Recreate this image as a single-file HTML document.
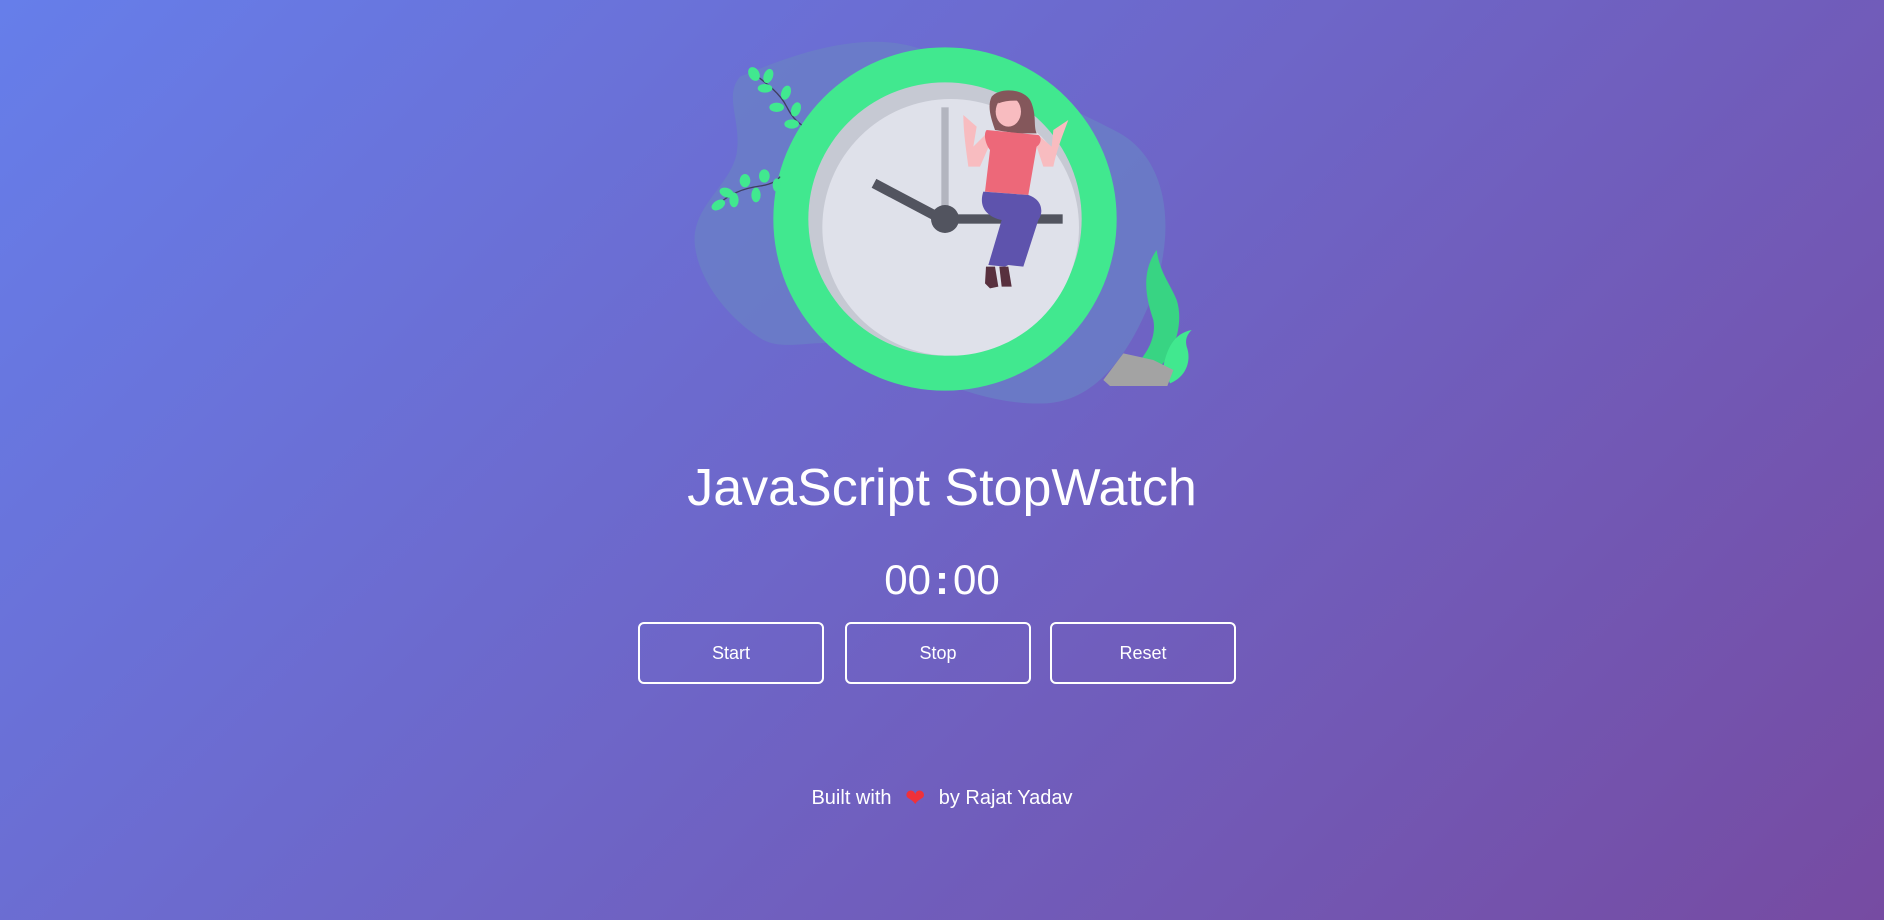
<!DOCTYPE html>
<html><head><meta charset="utf-8"><style>
html,body{margin:0;padding:0;width:1884px;height:920px;overflow:hidden}
body{background:linear-gradient(135deg,#667eea 0%,#764ba2 100%);font-family:"Liberation Sans",Arial,sans-serif;color:#fff;position:relative}
svg.ill{position:absolute;left:680px;top:20px;width:520px;height:400px}
h1{position:absolute;left:0;width:1884px;top:456px;margin:0;text-align:center;font-weight:400;font-size:52px;line-height:64px}
.timer{position:absolute;left:0;width:1884px;top:556px;text-align:center;font-size:42px;line-height:48px}
.timer b{font-weight:700;margin:0 4px}
.btn{position:absolute;top:622px;width:182px;height:58px;border:2px solid #fff;border-radius:6px;text-align:center;line-height:58px;font-size:18px}
.foot{position:absolute;left:0;width:1884px;top:786px;text-align:center;font-size:20px;line-height:24px}
.heart{display:inline-block;color:#f0313a;margin:0 8px;font-size:24px;line-height:20px;vertical-align:-2px}
</style></head><body>
<svg class="ill" viewBox="0 0 1560 1200">
<path d="M180,170 C300,120 520,30 700,80 C900,140 1150,250 1320,340 C1460,420 1490,620 1420,820 C1360,980 1260,1140 1100,1150 C900,1160 700,1050 560,990 C430,940 330,1000 250,960 C150,900 60,790 45,680 C30,560 150,500 170,400 C185,300 130,230 180,170Z" fill="#6a80c6" opacity="0.75"/>
<circle cx="795" cy="597" r="515" fill="#41e88f"/>
<circle cx="795" cy="597" r="410" fill="#c6c9d3"/>
<circle cx="812" cy="622" r="385" fill="#dfe1ea"/>
<rect x="784" y="262" width="22" height="300" fill="#b3b5bf"/>
<line x1="582" y1="490" x2="775" y2="592" stroke="#52545f" stroke-width="30"/>
<rect x="800" y="583" width="348" height="28" fill="#52545f"/>
<circle cx="795" cy="597" r="42" fill="#52545f"/>
<!-- woman -->
<path d="M935,230 C960,200 1040,205 1055,250 C1070,290 1060,320 1070,340 L1010,340 L945,330 C935,300 920,260 935,230Z" fill="#84575b"/>
<ellipse cx="985" cy="275" rx="38" ry="45" fill="#f8bcc0"/>
<path d="M955,230 C975,210 1030,215 1040,245 C1010,240 980,240 955,250Z" fill="#84575b"/>
<path d="M850,285 L890,320 L880,380 L920,340 L935,360 L900,440 L865,440 C860,400 850,340 850,285Z" fill="#f8bcc0"/>
<path d="M1165,300 L1120,330 L1115,380 L1080,350 L1070,380 L1090,440 L1120,440 C1130,390 1150,340 1165,300Z" fill="#f8bcc0"/>
<path d="M920,330 L1075,345 C1085,350 1085,370 1070,380 L1045,525 L915,515 L930,390 C915,370 910,340 920,330Z" fill="#ed6879"/>
<path d="M910,515 L1045,525 C1090,540 1090,580 1075,600 L1030,740 L985,735 L975,740 L925,735 L965,600 C920,590 895,560 910,515Z" fill="#5e53ad"/>
<path d="M918,740 L945,740 L955,800 L930,805 L915,790Z" fill="#58303e"/>
<path d="M958,740 L985,740 L995,800 L965,800 Z" fill="#58303e"/>
<!-- branches -->
<path d="M220,160 C260,190 300,220 320,260 C335,290 350,305 365,315" stroke="#3e3f60" stroke-width="4" fill="none"/>
<g fill="#41e88f">
<ellipse cx="222" cy="162" rx="16" ry="22" transform="rotate(-30 222 162)"/>
<ellipse cx="265" cy="168" rx="14" ry="22" transform="rotate(20 265 168)"/>
<ellipse cx="255" cy="205" rx="22" ry="13"/>
<ellipse cx="318" cy="218" rx="14" ry="22" transform="rotate(20 318 218)"/>
<ellipse cx="290" cy="262" rx="22" ry="14"/>
<ellipse cx="348" cy="268" rx="14" ry="22" transform="rotate(20 348 268)"/>
<ellipse cx="335" cy="312" rx="22" ry="14"/>
</g>
<path d="M105,560 C150,520 190,505 240,498 C270,494 290,485 300,470" stroke="#3e3f60" stroke-width="4" fill="none"/>
<g fill="#41e88f">
<ellipse cx="115" cy="555" rx="22" ry="14" transform="rotate(-30 115 555)"/>
<ellipse cx="140" cy="518" rx="22" ry="14" transform="rotate(20 140 518)"/>
<ellipse cx="162" cy="540" rx="14" ry="22"/>
<ellipse cx="195" cy="482" rx="16" ry="20"/>
<ellipse cx="228" cy="525" rx="14" ry="22"/>
<ellipse cx="253" cy="468" rx="16" ry="20"/>
<ellipse cx="290" cy="495" rx="12" ry="20"/>
</g>
<!-- plant -->
<path d="M1430,690 C1380,760 1400,840 1420,900 C1430,950 1400,1000 1380,1020 L1440,1040 C1490,990 1510,900 1490,840 C1470,790 1440,760 1430,690Z" fill="#38d483"/>
<path d="M1535,930 C1480,940 1460,990 1450,1040 L1470,1090 C1520,1070 1535,1020 1520,980 C1515,960 1520,945 1535,930Z" fill="#41e88f"/>
<path d="M1270,1080 L1330,1000 L1420,1020 L1480,1050 L1462,1098 L1290,1098 Z" fill="#a3a3a3"/>
</svg>
<h1>JavaScript StopWatch</h1>
<div class="timer">00<b>:</b>00</div>
<div class="btn" style="left:638px">Start</div>
<div class="btn" style="left:845px">Stop</div>
<div class="btn" style="left:1050px">Reset</div>
<div class="foot">Built with <span class="heart">❤</span> by Rajat Yadav</div>
</body></html>
